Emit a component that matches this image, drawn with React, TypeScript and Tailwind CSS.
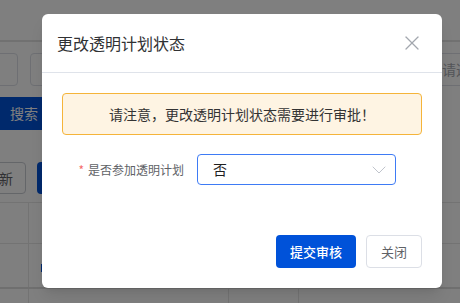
import { X, ChevronDown } from 'lucide-react'

const font = "font-['Noto_Sans_CJK_SC','Noto_Sans',sans-serif]"

function BackgroundPage() {
  return (
    <div className="flex flex-col">
      {/* top bar */}
      <div className="h-[42px] border-b-2 border-[#e3e3e3]" />

      {/* filter inputs */}
      <div className="mt-[11px] flex h-[33px] gap-3">
        <div className="ml-[-82px] w-[100px] shrink-0 rounded border border-[#dcdfe6]" />
        <div className="w-[200px] shrink-0 rounded border border-[#dcdfe6]" />
        <div className="ml-auto mr-[-120px] flex w-[150px] shrink-0 items-center rounded border border-[#dcdfe6] pl-[11px] text-[14px] text-[#a8abb2]">
          请选择
        </div>
      </div>

      {/* search */}
      <div className="mt-[11px] flex">
        <div className="ml-[-8px] flex h-[33px] w-[64px] items-center justify-center rounded bg-[#0052d9] text-[14px] text-white">
          搜索
        </div>
      </div>

      {/* actions */}
      <div className="mt-[32px] flex gap-[11px]">
        <div className="ml-[-40px] flex h-[32px] w-[66px] items-center justify-end rounded border border-[#c9ccd3] pr-3 text-[14px] text-[#606266]">
          重新
        </div>
        <div className="h-[32px] w-[80px] rounded bg-[#0052d9]" />
      </div>

      {/* table */}
      <div className="mt-[8px] border-t border-[#e6e6e6]">
        <div className="grid h-[41px] grid-cols-[29px_200px_70px_1fr] border-b border-[#e6e6e6]">
          <div className="border-r border-[#e6e6e6]" />
          <div className="border-r border-[#e6e6e6]" />
          <div className="border-r border-[#e6e6e6]" />
          <div />
        </div>
        <div className="grid h-[45px] grid-cols-[29px_200px_70px_1fr] border-b-2 border-[#dedede]">
          <div className="border-r border-[#e6e6e6]" />
          <div className="border-r border-[#e6e6e6] pl-[12px] pt-[20px]">
            <div className="h-[8px] w-[3px] bg-[#0052d9]" />
          </div>
          <div className="border-r border-[#e6e6e6]" />
          <div />
        </div>
        <div className="grid h-[41px] grid-cols-[29px_200px_70px_1fr]">
          <div className="border-r border-[#e6e6e6]" />
          <div className="border-r border-[#e6e6e6]" />
          <div className="border-r border-[#e6e6e6]" />
          <div />
        </div>
      </div>
    </div>
  )
}

export default function App() {
  return (
    <div className={`relative h-[303px] w-[460px] overflow-hidden bg-white ${font}`}>
      <BackgroundPage />

      {/* modal overlay */}
      <div className="absolute inset-0 bg-black/50 pl-[42px] pt-[14px]">
        <div className="flex h-[274px] w-[400px] flex-col rounded-md bg-white shadow-lg">
          {/* header */}
          <div className="flex h-[59px] items-center justify-between border-b border-[#dfe3ea] pl-[15px] pr-[18px]">
            <span className="text-[16px] text-[#303133]">更改透明计划状态</span>
            <X className="h-[24px] w-[24px] text-[#a3a7ae]" strokeWidth={1.25} />
          </div>

          {/* body */}
          <div className="flex flex-1 flex-col px-5 pt-5">
            <div className="flex h-[42px] items-center justify-center rounded border border-[#f5b43a] bg-[#fef4e3] text-[14px] text-[#333]">
              请注意，更改透明计划状态需要进行审批！
            </div>

            <div className="mt-[19px] flex h-[31px] items-center">
              <label className="flex w-[135px] shrink-0 items-center justify-end pr-[13px] text-[12px] text-[#606266]">
                <span className="mr-[4px] text-[#f56c6c]">*</span>
                是否参加透明计划
              </label>
              <div className="flex h-[31px] w-[199px] items-center justify-between rounded border border-[#3e7bf5] pl-[15px] pr-[4px]">
                <span className="text-[14px] text-[#1f1f1f]">否</span>
                <ChevronDown className="h-[24px] w-[24px] text-[#c0c4cc]" strokeWidth={1} />
              </div>
            </div>

            <div className="mt-auto mb-5 flex justify-end gap-[10px]">
              <button className="h-[33px] w-[80px] rounded bg-[#0052d9] text-[13px] font-medium text-white">
                提交审核
              </button>
              <button className="h-[33px] w-[56px] rounded border border-[#dcdfe6] bg-white text-[13px] text-[#606266]">
                关闭
              </button>
            </div>
          </div>
        </div>
      </div>
    </div>
  )
}
